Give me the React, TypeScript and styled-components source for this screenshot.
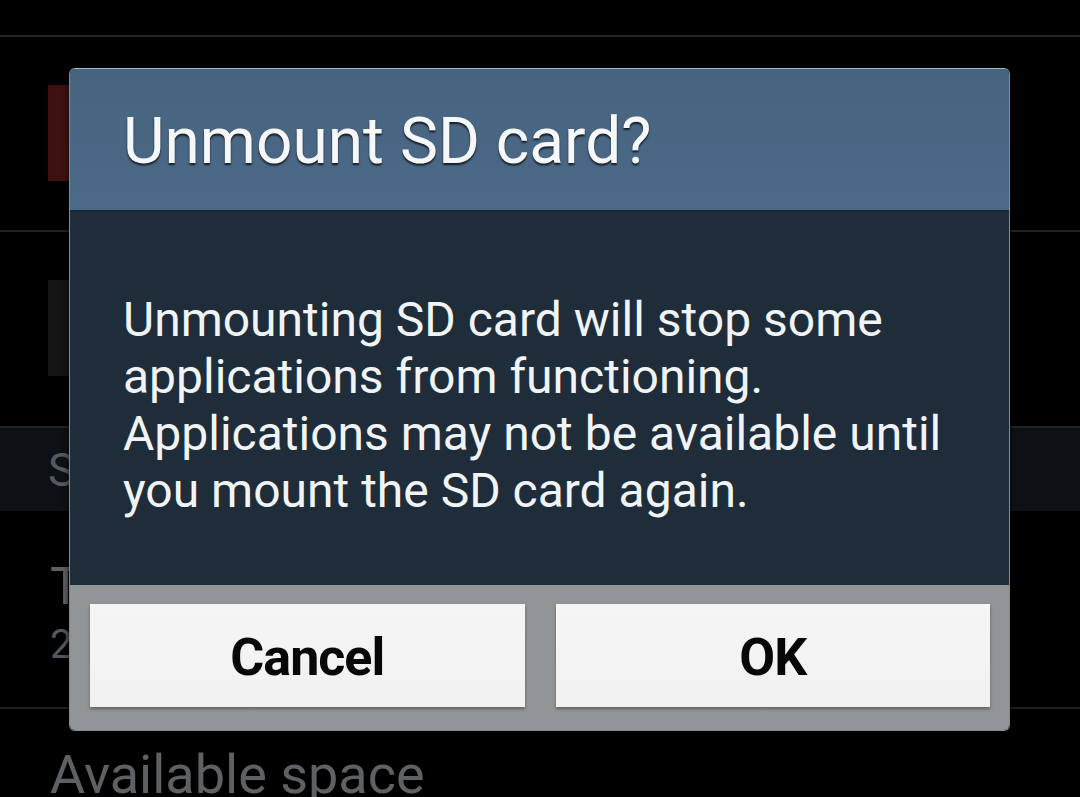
import React from 'react';
import styled, {createGlobalStyle} from 'styled-components';

const GlobalStyle = createGlobalStyle`
  html, body {
    margin: 0;
    padding: 0;
    background: #000;
  }
  body {
    font-family: Roboto, "Noto Sans", "Liberation Sans", sans-serif;
  }
`;

const Screen = styled.div`
  position: relative;
  width: 1080px;
  height: 797px;
  overflow: hidden;
  background: #000;
`;

const List = styled.div`
  display: flex;
  flex-direction: column;
`;

const TopBar = styled.div`
  height: 35px;
  border-bottom: 2px solid #262626;
`;

interface IconRowProps {
  readonly tall: number;
};

const IconRow = styled.div<IconRowProps>`
  height: ${props => props.tall}px;
  box-sizing: border-box;
  padding: 48px 0 0 48px;
  border-bottom: 2px solid #222;
`;

interface IconBlockProps {
  readonly tone: string;
};

const IconBlock = styled.div<IconBlockProps>`
  width: 96px;
  height: 96px;
  background: ${props => props.tone};
`;

const SectionHeader = styled.div`
  height: 83px;
  display: flex;
  align-items: center;
  padding-left: 48px;
  background: #0d1115;
  color: #55595d;
  font-size: 46px;
`;

const InfoRow = styled.div`
  height: 198px;
  box-sizing: border-box;
  padding: 46px 0 0 50px;
  border-bottom: 2px solid #1e1e1e;
`;

const InfoTitle = styled.div`
  color: #5e6164;
  font-size: 52px;
  line-height: 60px;
`;

const InfoValue = styled.div`
  color: #55585b;
  font-size: 40px;
  line-height: 56px;
`;

const PlainRow = styled.div`
  padding: 36px 0 0 50px;
  color: #5e6164;
  font-size: 54px;
  line-height: 60px;
  white-space: nowrap;
`;

const Dialog = styled.div`
  position: absolute;
  left: 69px;
  top: 68px;
  width: 941px;
  height: 663px;
  box-sizing: border-box;
  display: flex;
  flex-direction: column;
  border-radius: 6px;
  overflow: hidden;
  border: 1px solid #7f8c98;
  border-top-color: #a4b6c7;
  box-shadow: 0 0 6px rgba(0, 0, 0, 0.8);
`;

const Header = styled.div`
  height: 143px;
  flex-shrink: 0;
  box-sizing: border-box;
  padding: 41px 0 0 53px;
  background: linear-gradient(#47647f, #4b6a88);
  border-bottom: 2px solid #1a2835;
`;

const Title = styled.div`
  color: #f5f7f9;
  font-size: 64px;
  line-height: 64px;
  text-shadow: 0 2px 2px rgba(0, 0, 0, 0.75);
`;

const Body = styled.div`
  height: 373px;
  flex-shrink: 0;
  box-sizing: border-box;
  padding: 79px 0 0 53px;
  background: #1f2d3a;
  color: #f1f4f7;
  font-size: 48px;
  line-height: 57px;
`;

const Footer = styled.div`
  flex: 1;
  display: flex;
  gap: 31px;
  padding: 19px 19px 0 20px;
  background: #919598;
`;

const Button = styled.div`
  flex: 1;
  height: 103px;
  display: flex;
  align-items: center;
  justify-content: center;
  padding-top: 4px;
  box-sizing: border-box;
  background: linear-gradient(#f5f5f5, #f1f1f1);
  box-shadow: 0 2px 3px rgba(0, 0, 0, 0.35);
  color: #080808;
  font-size: 52px;
  font-weight: 700;
  letter-spacing: -1px;
`;

const App: React.FC = () => {
  return (
    <Screen>
      <GlobalStyle />
      <List>
        <TopBar />
        <IconRow tall={195}>
          <IconBlock tone="#3e1111" />
        </IconRow>
        <IconRow tall={196}>
          <IconBlock tone="#141414" />
        </IconRow>
        <SectionHeader>SD card</SectionHeader>
        <InfoRow>
          <InfoTitle>Total space</InfoTitle>
          <InfoValue>29.71GB</InfoValue>
        </InfoRow>
        <PlainRow>Available space</PlainRow>
      </List>
      <Dialog>
        <Header>
          <Title>Unmount SD card?</Title>
        </Header>
        <Body>
          Unmounting SD card will stop some<br />
          applications from functioning.<br />
          Applications may not be available until<br />
          you mount the SD card again.
        </Body>
        <Footer>
          <Button>Cancel</Button>
          <Button>OK</Button>
        </Footer>
      </Dialog>
    </Screen>
  );
};

export default App;
